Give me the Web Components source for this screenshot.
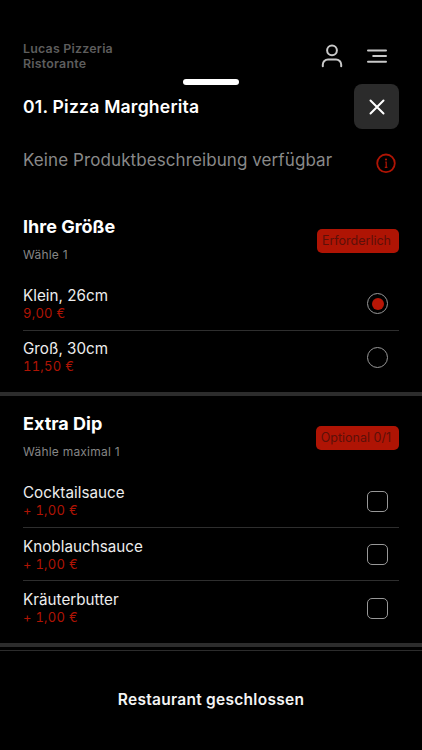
<!DOCTYPE html>
<html lang="de">
<head>
<meta charset="utf-8">
<meta name="viewport" content="width=device-width, initial-scale=1">
<title>Lucas Pizzeria Ristorante</title>
<style>
  html, body { margin: 0; height: 100%; background: #000; }
  body {
    --red: #af1404;
    --line: #2c2c2c;
    font-family: Inter, "Liberation Sans", sans-serif;
    color: #f2f2f2;
    overflow: hidden;
  }
</style>
</head>
<body>
<product-page>
  <shop-header slot="header">Lucas Pizzeria<br>Ristorante</shop-header>
  <product-intro slot="intro" name="01. Pizza Margherita">Keine Produktbeschreibung verfügbar</product-intro>
  <option-group name="Ihre Größe" hint="Wähle 1" badge="Erforderlich">
    <option-row type="radio" price="9,00 €" checked>Klein, 26cm</option-row>
    <option-row type="radio" price="11,50 €">Groß, 30cm</option-row>
  </option-group>
  <option-group name="Extra Dip" hint="Wähle maximal 1" badge="Optional 0/1">
    <option-row type="checkbox" price="+ 1,00 €">Cocktailsauce</option-row>
    <option-row type="checkbox" price="+ 1,00 €">Knoblauchsauce</option-row>
    <option-row type="checkbox" price="+ 1,00 €">Kräuterbutter</option-row>
  </option-group>
  <order-bar slot="footer">Restaurant geschlossen</order-bar>
</product-page>

<script>
(function () {
  'use strict';

  // Small base: renders the markup of the subclass into an open root
  class Base extends HTMLElement {
    connectedCallback() {
      if (this.shadowRoot) return;
      this.attachShadow({ mode: 'open' }).innerHTML =
        `<style>*, *::before { box-sizing: border-box; } :host { box-sizing: border-box; }</style>${this.render()}`;
    }
    attr(name) { return this.getAttribute(name) || ''; }
  }

  class ProductPage extends Base {
    render() {
      return `
        <style>
          :host { display: flex; flex-direction: column; width: 100%; height: 750px; background: #000; }
          main { flex: 1; min-height: 0; }
        </style>
        <slot name="header"></slot>
        <slot name="intro"></slot>
        <main><slot></slot></main>
        <slot name="footer"></slot>`;
    }
  }

  class ShopHeader extends Base {
    render() {
      return `
        <style>
          :host { display: flex; justify-content: space-between; height: 79px; padding: 41px 34px 0 23px; }
          .name { font-size: 12.4px; font-weight: 600; line-height: 15px; letter-spacing: .23px; color: #5d5d5d; }
          nav { display: flex; gap: 22px; color: #c9c9c9; }
          svg { display: block; fill: none; stroke: currentColor; stroke-width: 2; stroke-linecap: round; }
        </style>
        <div class="name"><slot></slot></div>
        <nav>
          <svg width="24" height="28" viewBox="0 0 24 28">
            <circle cx="12" cy="9.3" r="4.9"/>
            <path d="M2.8 25.3v-1.6a5.2 5.2 0 0 1 5.2-5.2h8a5.2 5.2 0 0 1 5.2 5.2v1.6"/>
          </svg>
          <svg width="22" height="28" viewBox="0 0 22 28">
            <path d="M2 9.5h18M7.2 15H20M2 20.8h18"/>
          </svg>
        </nav>`;
    }
  }

  class ProductIntro extends Base {
    render() {
      return `
        <style>
          :host { display: block; height: 133px; }
          .handle { width: 56px; height: 6px; margin: 0 auto; border-radius: 3px; background: #fff; }
          .row { display: flex; justify-content: space-between; padding: 0 23px; }
          .top { align-items: center; height: 43px; }
          h1 { margin: 0; font-size: 17.6px; font-weight: 600; line-height: 22px; letter-spacing: .2px; color: #fff; }
          button {
            display: grid; place-items: center; width: 45px; height: 45px; padding: 0;
            border: 0; border-radius: 8px; background: #2b2b2b; color: #fff;
          }
          svg { display: block; fill: none; stroke: currentColor; stroke-linecap: round; }
          .desc { padding-top: 20px; font-size: 17px; line-height: 24px; letter-spacing: .09px; color: #898989; }
          .info { margin: 5px 3px 0 0; color: var(--red); }
        </style>
        <div class="handle"></div>
        <div class="row top">
          <h1>${this.attr('name')}</h1>
          <button aria-label="Schließen">
            <svg width="16" height="16" viewBox="0 0 16 16" stroke-width="2"><path d="M1.5 1.5l13 13M14.5 1.5l-13 13"/></svg>
          </button>
        </div>
        <div class="row desc">
          <slot></slot>
          <svg class="info" width="20" height="20" viewBox="0 0 20 20" stroke-width="1.8">
            <circle cx="10" cy="10.3" r="8.8"/>
            <path d="M9.3 9.2h.9v5M8.8 14.3h2.6" stroke-width="1.2" stroke-linecap="butt"/>
            <circle cx="10" cy="6.5" r="1.1" fill="currentColor" stroke="none"/>
          </svg>
        </div>`;
    }
  }

  class OptionGroup extends Base {
    render() {
      return `
        <style>
          :host { display: block; padding: 0 23px 8.2px; border-bottom: 4px solid var(--line); }
          :host(:not(:first-of-type)) { padding-top: 13.2px; }
          header { display: flex; justify-content: space-between; height: 65.2px; }
          h2 { margin: 0; padding-top: 3px; font-size: 18px; font-weight: 700; line-height: 24px; color: #fff; }
          p { margin: 8px 0 0; font-size: 12px; line-height: 16px; letter-spacing: .22px; color: #868686; }
          .badge {
            height: 24px; margin-top: 17px; padding: 0 8px 0 5px; border-radius: 5px;
            background: var(--red); color: #5c1009; font-size: 12.5px; line-height: 24px; letter-spacing: 0;
          }
        </style>
        <header>
          <div><h2>${this.attr('name')}</h2><p>${this.attr('hint')}</p></div>
          <span class="badge">${this.attr('badge')}</span>
        </header>
        <slot></slot>`;
    }
  }

  class OptionRow extends Base {
    render() {
      const dot = this.hasAttribute('checked') ? '<i></i>' : '';
      return `
        <style>
          :host {
            display: flex; justify-content: space-between; align-items: center;
            height: 53.4px; border-bottom: 1px solid #2e2e2e;
          }
          :host(:last-of-type) { border-bottom-color: transparent; }
          .name { font-size: 15.2px; line-height: 20px; letter-spacing: .03px; color: #ededed; }
          .price {
            font-size: 13px; line-height: 15px; letter-spacing: .25px;
            font-variant-numeric: tabular-nums; color: var(--red);
          }
          .box {
            display: grid; place-items: center; width: 21px; height: 21px; margin: 1px 11px 0 0;
            border: 1.3px solid #989898; border-radius: 5px;
          }
          .radio { border-radius: 50%; }
          i { width: 12px; height: 12px; border-radius: 50%; background: #b81606; }
        </style>
        <div>
          <div class="name"><slot></slot></div>
          <div class="price">${this.attr('price')}</div>
        </div>
        <span class="box ${this.attr('type')}">${dot}</span>`;
    }
  }

  class OrderBar extends Base {
    render() {
      return `
        <style>
          :host {
            display: flex; justify-content: center; height: 100px; padding-top: 38px;
            border-top: 1px solid #2c2c2c; font-size: 15.5px; font-weight: 600;
            line-height: 22px; letter-spacing: .27px; color: #f4f4f4;
          }
        </style>
        <span><slot></slot></span>`;
    }
  }

  customElements.define('product-page', ProductPage);
  customElements.define('shop-header', ShopHeader);
  customElements.define('product-intro', ProductIntro);
  customElements.define('option-group', OptionGroup);
  customElements.define('option-row', OptionRow);
  customElements.define('order-bar', OrderBar);
})();
</script>
</body>
</html>
